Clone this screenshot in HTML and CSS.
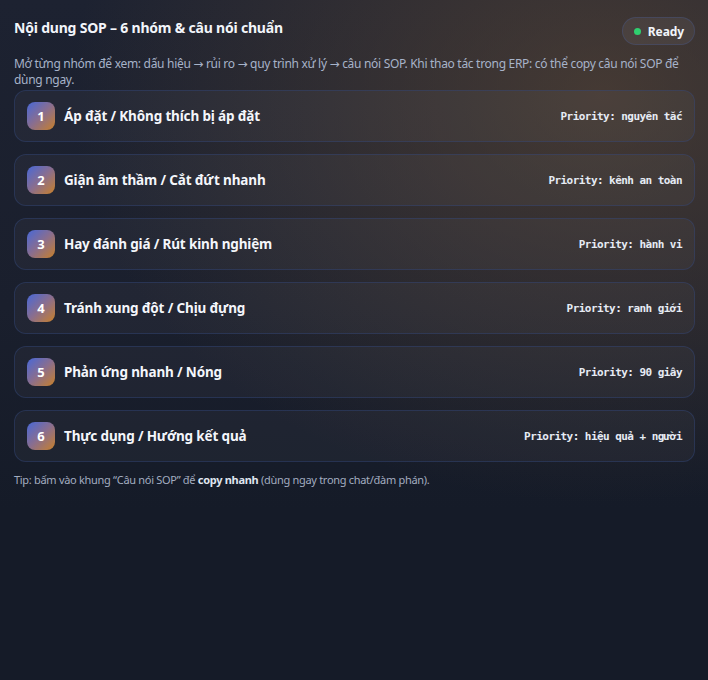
FILE: index.html
```html
<!DOCTYPE html>
<html lang="vi">
<head>
<meta charset="utf-8">
<title>SOP</title>
<link rel="stylesheet" href="styles.css">
</head>
<body>
<main class="panel">
  <header class="head">
    <h1 class="title">Nội dung SOP – 6 nhóm &amp; câu nói chuẩn</h1>
    <span class="pill"><span class="dot"></span>Ready</span>
  </header>
  <p class="desc">Mở từng nhóm để xem: dấu hiệu → rủi ro → quy trình xử lý → câu nói SOP. Khi thao tác trong ERP: có thể copy câu nói SOP để dùng ngay.</p>
  <div class="list">
    <div class="card"><span class="num">1</span><span class="name">Áp đặt / Không thích bị áp đặt</span><span class="prio">Priority: nguyên tắc</span></div>
    <div class="card"><span class="num">2</span><span class="name">Giận âm thầm / Cắt đứt nhanh</span><span class="prio">Priority: kênh an toàn</span></div>
    <div class="card"><span class="num">3</span><span class="name">Hay đánh giá / Rút kinh nghiệm</span><span class="prio">Priority: hành vi</span></div>
    <div class="card"><span class="num">4</span><span class="name">Tránh xung đột / Chịu đựng</span><span class="prio">Priority: ranh giới</span></div>
    <div class="card"><span class="num">5</span><span class="name">Phản ứng nhanh / Nóng</span><span class="prio">Priority: 90 giây</span></div>
    <div class="card"><span class="num">6</span><span class="name">Thực dụng / Hướng kết quả</span><span class="prio">Priority: hiệu quả + người</span></div>
  </div>
  <p class="tip">Tip: bấm vào khung “Câu nói SOP” để <b>copy nhanh</b> (dùng ngay trong chat/đàm phán).</p>
</main>
</body>
</html>
```

FILE: styles.css
```css
html, body {
  margin: 0;
  padding: 0;
  height: 100%;
}
body {
  background: #151b28;
  font-family: "Segoe UI", "Noto Sans", "DejaVu Sans", sans-serif;
  color: #e8edf5;
}
.panel {
  min-height: 680px;
  box-sizing: border-box;
  padding: 16px 13px 0 14px;
  background:
    radial-gradient(ellipse 75% 60% at 85% 14%, rgba(96, 74, 54, 0.6), rgba(96, 74, 54, 0) 100%),
    linear-gradient(180deg, #1d2231 0%, #1a1f2d 45%, #151b28 75%, #151b28 100%);
}
.head {
  display: flex;
  justify-content: space-between;
  align-items: flex-start;
}
.title {
  margin: 2px 0 0;
  font-size: 14px;
  font-weight: 700;
  letter-spacing: -0.2px;
  color: #f2f5fa;
  line-height: 20px;
}
.pill {
  display: inline-flex;
  align-items: center;
  gap: 7px;
  height: 26px;
  padding: 0 10px 0 11px;
  margin-top: 1px;
  border-radius: 14px;
  background: rgba(255, 255, 255, 0.06);
  border: 1px solid rgba(70, 90, 150, 0.35);
  font-size: 12px;
  font-weight: 700;
  letter-spacing: -0.1px;
  color: #f2f5fa;
}
.dot {
  width: 7px;
  height: 7px;
  border-radius: 50%;
  background: #2fcf6f;
}
.desc {
  margin: 11px 0 0;
  font-size: 12px;
  letter-spacing: -0.3px;
  line-height: 16px;
  color: #a7b3c9;
}
.list {
  display: flex;
  flex-direction: column;
  gap: 12px;
  margin-top: 2px;
}
.card {
  display: flex;
  align-items: center;
  height: 50px;
  padding: 0 12px 0 12px;
  border-radius: 12px;
  background: rgba(255, 255, 255, 0.035);
  border: 1px solid rgba(52, 72, 125, 0.45);
}
.num {
  width: 28px;
  height: 28px;
  border-radius: 8px;
  background: linear-gradient(135deg, #4868d8 0%, #8a6e8e 50%, #c8802a 100%);
  display: flex;
  align-items: center;
  justify-content: center;
  font-size: 13px;
  font-weight: 700;
  color: #fff;
  flex: none;
}
.name {
  margin-left: 9px;
  font-size: 13.5px;
  font-weight: 700;
  letter-spacing: -0.15px;
  color: #f4f6fb;
  flex: 1;
}
.prio {
  font-family: "DejaVu Sans Mono", "Liberation Mono", monospace;
  font-size: 11px;
  letter-spacing: -0.55px;
  font-weight: 700;
  color: #e6ebf4;
}
.tip {
  margin: 11px 0 0;
  font-size: 11px;
  letter-spacing: -0.3px;
  line-height: 14px;
  color: #a3adc0;
}
.tip b {
  color: #dfe5ef;
  font-weight: 700;
}
```
